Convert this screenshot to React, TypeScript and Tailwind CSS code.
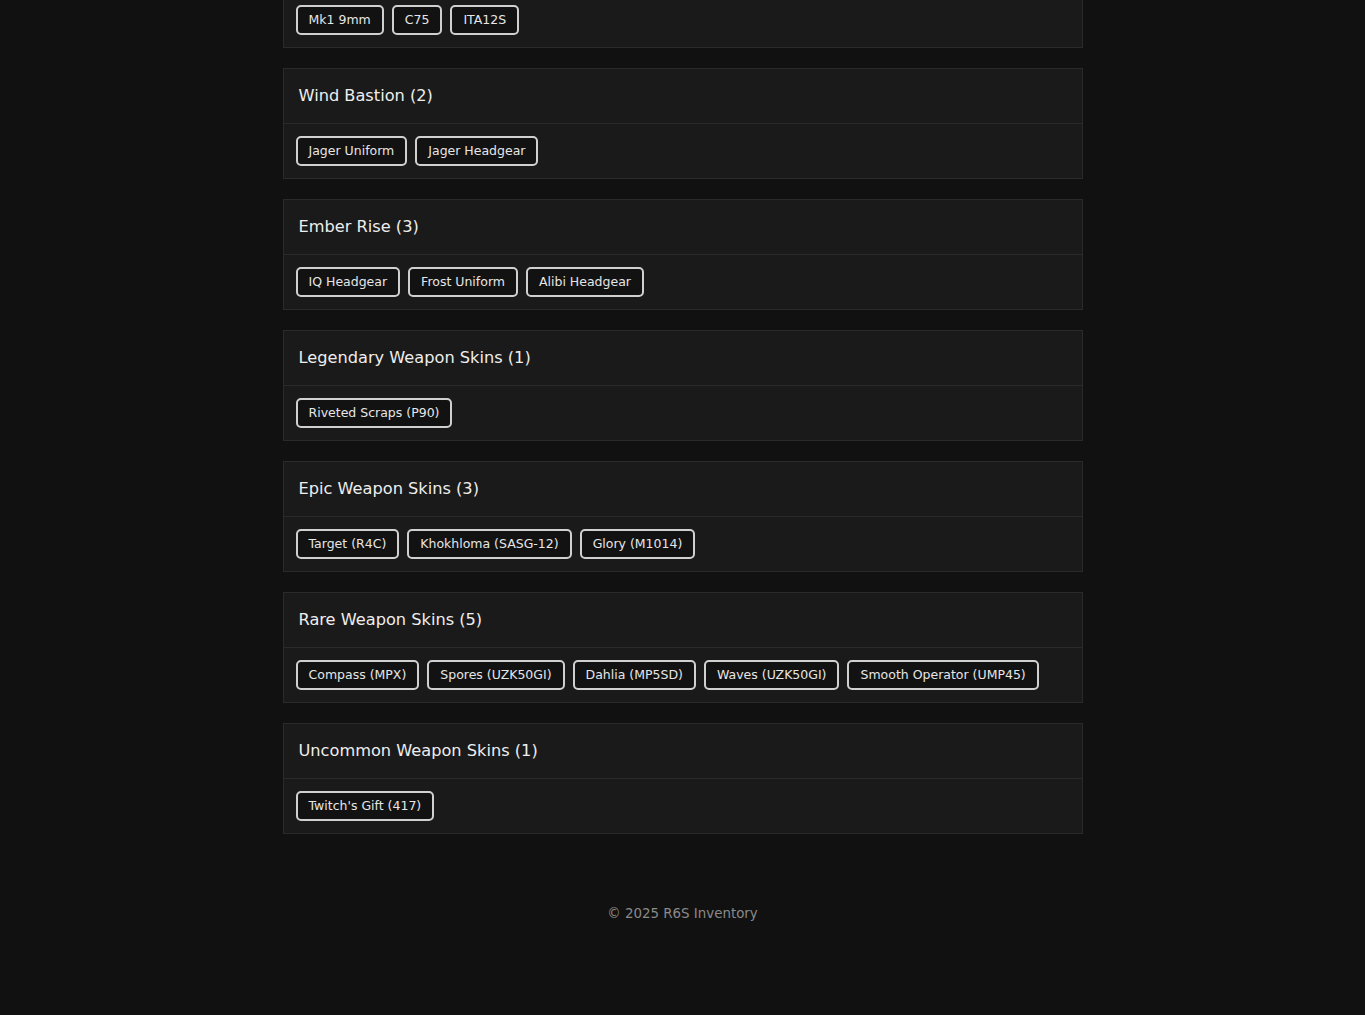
import React from "react";

const sections: { title: string; items: string[] }[] = [
  { title: "Wind Bastion (2)", items: ["Jager Uniform", "Jager Headgear"] },
  { title: "Ember Rise (3)", items: ["IQ Headgear", "Frost Uniform", "Alibi Headgear"] },
  { title: "Legendary Weapon Skins (1)", items: ["Riveted Scraps (P90)"] },
  { title: "Epic Weapon Skins (3)", items: ["Target (R4C)", "Khokhloma (SASG-12)", "Glory (M1014)"] },
  {
    title: "Rare Weapon Skins (5)",
    items: ["Compass (MPX)", "Spores (UZK50GI)", "Dahlia (MP5SD)", "Waves (UZK50GI)", "Smooth Operator (UMP45)"],
  },
  { title: "Uncommon Weapon Skins (1)", items: ["Twitch's Gift (417)"] },
];

function Chip({ label }: { label: string }) {
  return (
    <span className="inline-flex h-[30px] items-center rounded-[5px] border-2 border-[#d0d0d0] bg-[#121212] px-[11px] pt-[1px] text-[12.5px] text-[#e6e6e6]">
      {label}
    </span>
  );
}

function Body({ items }: { items: string[] }) {
  return (
    <div className="flex flex-wrap gap-[8px] px-[12px] pt-[12px] pb-[12px]">
      {items.map((i) => (
        <Chip key={i} label={i} />
      ))}
    </div>
  );
}

export default function App() {
  return (
    <div
      className="min-h-[1015px] bg-[#111111] text-white"
      style={{ fontFamily: '"DejaVu Sans", "Noto Sans", sans-serif' }}
    >
      <div className="mx-auto flex w-[800px] flex-col gap-[20px]">
        <div className="-mt-[7px] border border-t-0 border-[#2a2a2a] bg-[#1a1a1a]">
          <Body items={["Mk1 9mm", "C75", "ITA12S"]} />
        </div>
        {sections.map((s) => (
          <div key={s.title} className="border border-[#2a2a2a] bg-[#1a1a1a]">
            <div className="flex h-[55px] items-center border-b border-[#2a2a2a] px-[15px] text-[16.2px] text-[#eeeeee]">
              {s.title}
            </div>
            <Body items={s.items} />
          </div>
        ))}
      </div>
      <footer className="mt-[70px] pb-[80px] text-center text-[13.4px] text-[#8a8a8a]">© 2025 R6S Inventory</footer>
    </div>
  );
}
